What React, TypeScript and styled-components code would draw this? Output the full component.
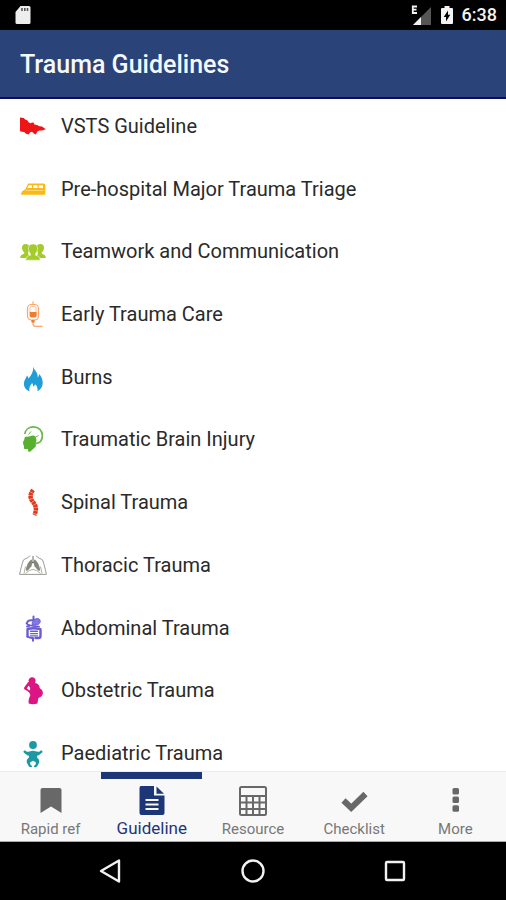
import React from "react";
import styled, { createGlobalStyle } from "styled-components";

const navy = "#1c3678";

const GlobalStyle = createGlobalStyle`
  * { box-sizing: border-box; }
  body { margin: 0; background: #fff; font-family: Roboto, "Liberation Sans", sans-serif; }
  button { font: inherit; border: 0; padding: 0; background: none; cursor: pointer; }
`;

const Screen = styled.div`
  display: flex;
  flex-direction: column;
  height: 100vh;
`;

const StatusBar = styled.div`
  display: flex;
  align-items: center;
  justify-content: space-between;
  flex: none;
  height: 30px;
  padding: 0 9px 0 14px;
  background: #000;
  color: #f4f4f4;
`;

const StatusGroup = styled.div`
  display: flex;
  align-items: center;
  gap: 9px;
`;

const Clock = styled.time`
  font-size: 18px;
  font-weight: 500;
  line-height: 24px;
`;

const Header = styled.header`
  flex: none;
  display: flex;
  align-items: center;
  height: 69px;
  padding: 2px 20px 0;
  background: #2a4379;
  border-bottom: 2px solid #0c0c66;
`;

const Title = styled.h1`
  margin: 0;
  color: #f6f8ff;
  font-size: 25px;
  font-weight: 500;
  line-height: 32px;
`;

const GuidelineList = styled.ul`
  flex: 1;
  min-height: 0;
  display: flex;
  flex-direction: column;
  justify-content: space-between;
  margin: 0;
  padding: 9px 0 0;
  list-style: none;
  overflow: hidden;
`;

const GuidelineRow = styled.button`
  display: flex;
  align-items: center;
  gap: 15px;
  width: 100%;
  height: 36px;
  padding: 0 20px;
  color: #2a2a2a;
  font-size: 20px;
  line-height: 24px;
  text-align: left;
`;

const RowIcon = styled.svg`
  flex: none;
  width: 26px;
  height: 28px;
  overflow: visible;
`;

const TabBar = styled.nav`
  flex: none;
  display: grid;
  grid-template-columns: repeat(5, 1fr);
  height: 71px;
  background: #f8f8f8;
  border-top: 1px solid #ececec;
  border-bottom: 1px solid #aaa;
`;

const Tab = styled.button<{ $active?: boolean }>`
  display: flex;
  flex-direction: column;
  align-items: center;
  justify-content: flex-end;
  gap: ${(p) => (p.$active ? 2 : 4)}px;
  padding: 0 0 3px;
  border-top: 7px solid ${(p) => (p.$active ? navy : "transparent")};
  color: ${(p) => (p.$active ? navy : "#777")};
  font-size: ${(p) => (p.$active ? 17 : 15)}px;
  line-height: ${(p) => (p.$active ? 20 : 18)}px;
`;

const TabIcon = styled.svg`
  width: 30px;
  height: 30px;
  color: ${navy};

  ${Tab}:not([aria-current]) & {
    color: #686868;
  }
`;

const SystemBar = styled.div`
  flex: none;
  display: grid;
  grid-template-columns: repeat(3, 1fr);
  height: 58px;
  padding: 0 40px;
  background: #000;
`;

const SystemButton = styled.button`
  display: grid;
  place-items: center;
  color: #f2f2f2;
`;

const guidelines: { label: string; icon: React.ReactNode }[] = [
  {
    label: "VSTS Guideline",
    icon: (
      <path
        fill="#ee1518"
        d="M0 5.500 3.800 6 5.200 7.400 7.200 8.200 8.600 10.200 10.400 11.200 12.200 10.600 13.800 10.800 14.400 12.600 17 13 19.400 14.200 22 14.600 25.800 17.200 22 18.400 19.200 18.400 17.200 19.800 15.800 22.400 13.800 21.600 12 19.800 10.200 20.200 8.600 22.400 6 21.800 4.600 20.200 2.400 19.800 0 19.200z"
      />
    ),
  },
  {
    label: "Pre-hospital Major Trauma Triage",
    icon: (
      <g>
        <path fill="#fbb915" d="M8.500 8.600h15.200q1.600 0 1.600 1.600v8.600q0 1-1 1H1.400q-.8 0-.4-1l1.200-2.600 3.200-2 2.200-4.800q.3-.8.900-.8z" />
        <path fill="#fff" d="M8.800 10.200H12v2.900H7.400zM13.200 10.200h4.300v2.900h-4.300zM18.700 10.200h4.300v2.900h-4.300z" />
        <path stroke="#fff" strokeWidth=".6" d="M5.500 15.400h18" opacity=".8" />
      </g>
    ),
  },
  {
    label: "Teamwork and Communication",
    icon: (
      <g fill="#a3cb2b">
        <path d="M5.500 7c2.800 0 4.300 1.800 4 4.600-.1 1.600-.6 2.900-1.300 3.900v1.700l3 3.800H.2c0-2.400 1-3.400 4-4.200v-1.400C2.600 13.800 2 12.300 2 10.800 2 8.400 3.300 7 5.500 7z" />
        <path d="M20.500 7c-2.800 0-4.300 1.800-4 4.600.1 1.600.6 2.900 1.300 3.900v1.700l-3 3.800h11c0-2.400-1-3.400-4-4.200v-1.400c1.600-1.600 2.200-3.100 2.200-4.600 0-2.400-1.300-3.800-3.500-3.800z" />
        <path
          stroke="#eef5d6"
          strokeWidth=".7"
          d="M13 7c3.400 0 4.800 2.200 4.500 5.200-.2 1.900-.9 3.300-2 4.500v1.500c3.400.8 4.600 1.800 4.700 5H5.800c.1-3.200 1.300-4.200 4.700-5v-1.500c-1.100-1.200-1.800-2.600-2-4.500C8.200 9.200 9.600 7 13 7z"
        />
      </g>
    ),
  },
  {
    label: "Early Trauma Care",
    icon: (
      <g fill="none" stroke="#f9a56c" strokeWidth="1.200" strokeLinecap="round">
        <path d="M13 1.800v2.600" />
        <rect x="7.500" y="4.500" width="11" height="15.500" rx="4" />
        <path d="M10 12V8q0-1.500 1.500-1.500h3Q16 6.500 16 8v4" strokeWidth=".7" />
        <path d="M9.600 12h7v3.500q0 2-2 2h-3q-2 0-2-2z" fill="#f47b2c" stroke="none" />
        <path d="M13 20v3.700q0 2.700 2.500 2.700h6.500" />
        <path d="M11.400 20h3.200v2.600h-3.200z" fill="#f47b2c" stroke="none" />
      </g>
    ),
  },
  {
    label: "Burns",
    icon: (
      <path
        fill="#219dd8"
        d="M13.400 3.800c.4 3 3.200 4.600 4 7.400.4 1.200.3 2.200.1 3.200 1.200-.9 1.500-2 1.500-3.400 2 1.600 3.500 4.800 3.700 8.200.2 4-2 7.400-5.200 9 .4-3.400-.5-5.400-2.400-7-.4 1.200-1.100 1.900-2 2.600.1-1.500-.2-2.600-1-3.800-2 2.600-3.400 4.900-2.600 8.200C6 26.800 3.800 24 3.900 20.400 4 17 6 15.500 7 12.400c.8 1 1.300 1.900 1.400 3.200 3.600-3.600 4.800-7.200 5-11.800z"
      />
    ),
  },
  {
    label: "Traumatic Brain Injury",
    icon: (
      <g>
        <path
          fill="none"
          stroke="#6aba45"
          strokeWidth="1.700"
          d="M4.800 9C5.400 4.600 9 1.900 13.600 1.900c5 0 8.800 3.600 8.800 8.500 0 4.600-2.800 7.600-6.800 8.200"
        />
        <path
          fill="#58b02e"
          d="M4.800 12.200c1.600-1 3.400-.2 5.400-1 1.800-.7 3.800-1.200 5 .2.900 1.100.4 2.500 1.400 3.300l-.8 2.800v4l-5.600 5.300-2-.2-.4-2.600c-1.600.2-3.400.4-3.800-.4-.3-.8.2-2-.2-3-.2-.7-.8-1-.5-1.700L3 17.800c-.5-.6.300-1.300.9-2.400.6-1 .5-2 .9-3.200z"
        />
        <path fill="none" stroke="#58b02e" strokeWidth=".9" d="M8.500 9.500l2.500-3M15 12.500l3.500-2" />
      </g>
    ),
  },
  {
    label: "Spinal Trauma",
    icon: (
      <g>
        <path fill="none" stroke="#f29a84" strokeWidth="4" d="M13 2C9.500 6.500 10 10.500 13 14c2.800 3.200 4.200 7.200 1.400 13" />
        <path
          fill="none"
          stroke="#e23a20"
          strokeWidth="4.400"
          strokeDasharray="2.500 .8"
          d="M13 2C9.500 6.500 10 10.500 13 14c2.800 3.200 4.200 7.200 1.400 13"
        />
      </g>
    ),
  },
  {
    label: "Thoracic Trauma",
    icon: (
      <g fill="none" stroke="#999b94" strokeWidth="1">
        <path d="M10 4.500C8.500 7.300 5 7.500 3.400 9 2 13 .6 18.500-.4 23.400h26.800C25.400 18.500 24 13 22.600 9 21 7.500 17.500 7.300 16 4.500" />
        <path d="M4 22.500l1.500-7M22 22.500l-1.500-7" strokeWidth=".8" />
        <path d="M13 5v7.500M13 11l-2 2M13 11l2 2" stroke="#666a60" />
        <path
          fill="#85897c"
          stroke="none"
          d="M11.800 8.500c.5 2.500.3 4.800-.3 7-1 1.200-2.300 2.200-3.500 3.800-1 1-2.400.6-2-1.200.8-4 2.600-8.400 5.800-9.600zM14.200 8.500c-.5 2.500-.3 4.800.3 7 1 1.200 2.300 2.200 3.500 3.800 1 1 2.400.6 2-1.200-.8-4-2.600-8.400-5.800-9.600z"
        />
        <path d="M5.500 22.500q7.500-8 15 0" strokeWidth=".8" />
      </g>
    ),
  },
  {
    label: "Abdominal Trauma",
    icon: (
      <g fill="none" stroke="#6a5cd6" strokeLinecap="round" strokeLinejoin="round">
        <path strokeWidth="2" d="M13.500 2.500v2.800q0 1-1.200 1c-3.500-.4-5.300 1-5.300 3" />
        <path fill="#8377e0" strokeWidth="1" d="M14.500 5.500c3-2.200 6.200-.8 5.600 2.500-.6 2.700-4.200 3.500-7.800 3-.5-2 .3-3.800 2.200-5.500z" />
        <path strokeWidth="1.800" d="M6.500 9.500c2 2.200 6 2.700 12.500 3.200M7 12.500h2" />
        <path strokeWidth="2.400" d="M7.500 22.500v-7.300q5.500-2 13 0v6.800q0 2-2 2h-3" />
        <path strokeWidth="1.400" d="M10.500 17.300h7M10.500 19.600h7M10.500 21.900h7" />
        <path strokeWidth="2" d="M7.500 22.500q2.500 1.700 5.500 1.500v2.800" />
      </g>
    ),
  },
  {
    label: "Obstetric Trauma",
    icon: (
      <path
        fill="#dc1484"
        fillRule="evenodd"
        d="M10.800 1.500c2.600-.8 4.800.8 4.800 3 0 1-.3 1.800-.6 2.600 3.200.6 4.400 2 4.800 5.200 2 1.200 3.200 2.800 3.100 4.800-.2 2.600-2 4.200-4.500 4.900-.6 2-.4 3.600-1 5.500-2.700 1-6.200 1-8.700 0-.6-3.200.5-5.900 1.700-8.300-.4-2-1.800-3.400-3.700-4.600-1.900-1-3.200-1.600-2.500-3.200L7.300 7.300c.6-1 .9-1 1.500-1.200-.7-2 .2-3.900 2-4.600zM8.400 9.700l-1.600 2.800 3 2c.8-2 .4-3.500-1.400-4.800z"
      />
    ),
  },
  {
    label: "Paediatric Trauma",
    icon: (
      <g fill="#1d99a4">
        <circle cx="13" cy="6" r="3.900" />
        <path d="M4.600 11.700c.6-.4 1.200 0 1.700.7 2.800 1 4-.6 6.700-.6s3.900 1.600 6.700.6c.5-.7 1.100-1.100 1.700-.7.5-.4 1 0 .8.5.6.1.6.8 0 1.200-2 2-3.600 3-5 3.200l-.2 3H9l-.2-3c-1.400-.2-3-1.200-5-3.200-.6-.4-.6-1.100 0-1.200-.2-.5.3-.9.800-.5z" />
        <path d="M9 18.600h8c2 1.600 2.800 3.400 2 5.400l-1.600 3c-.8 1.400-3.400 1.600-3.600.5 0-.7.8-1 1.600-1.500l.6-2.500-3-1.700-3 1.700.6 2.500c.8.5 1.600.8 1.600 1.500-.2 1.100-2.800.9-3.600-.5L7 24c-.8-2 0-3.800 2-5.400z" />
      </g>
    ),
  },
];

const tabs: { label: string; active?: boolean; icon: React.ReactNode }[] = [
  { label: "Rapid ref", icon: <path fill="currentColor" d="M6.500 2h17q2 0 2 2v23L15 20.500 4.500 27V4q0-2 2-2z" /> },
  {
    label: "Guideline",
    active: true,
    icon: (
      <g>
        <path fill="currentColor" d="M4 0h13v9.500h10.500V27q0 2-2 2h-21q-2 0-2-2V2q0-2 1.500-2z" />
        <path fill="currentColor" d="M19.500.5 27 7.800h-7.500z" />
        <path stroke="#f8f8f8" strokeWidth="1.800" d="M8.500 14h13M8.500 18.500h13M8.500 23h13" />
      </g>
    ),
  },
  {
    label: "Resource",
    icon: (
      <g fill="none" stroke="currentColor" strokeWidth="2">
        <rect x="2" y="1" width="26" height="28" rx="1.500" />
        <path d="M2 10h26M2 16.500h26M2 23h26M8.500 10v19M15 10v19M21.500 10v19" />
      </g>
    ),
  },
  { label: "Checklist", icon: <path fill="none" stroke="currentColor" strokeWidth="6" d="M4.500 14.500 12.200 21.800 26.500 8" /> },
  {
    label: "More",
    icon: (
      <g fill="currentColor">
        <rect x="12.500" y="2" width="6.500" height="6.500" rx="1.500" />
        <rect x="12.500" y="10.600" width="6.500" height="6.500" rx="1.500" />
        <rect x="12.500" y="19.200" width="6.500" height="6.500" rx="1.500" />
      </g>
    ),
  },
];

const systemButtons = [
  { label: "Back", shape: <path d="M21 2.500v21L3 13z" /> },
  { label: "Home", shape: <circle cx="13" cy="13" r="10.500" /> },
  { label: "Overview", shape: <rect x="4" y="4" width="18" height="18" rx="1" /> },
];

export default function App() {
  return (
    <Screen>
      <GlobalStyle />
      <StatusBar>
        <svg width="18" height="20" viewBox="0 0 18 20" aria-hidden="true">
          <path fill="#eee" d="M6.500 1H15q1.500 0 1.500 1.500v15q0 1.500-1.500 1.500H3q-1.500 0-1.500-1.500V7z" />
          <path stroke="#555" strokeWidth="1.600" d="M8 3v3M10.800 3v3M13.500 3v3" />
        </svg>
        <StatusGroup>
          <svg width="22" height="22" viewBox="0 0 22 22" aria-hidden="true">
            <path fill="#555" d="M21 3v18H3z" />
            <path fill="#f2f2f2" d="M11 13v8H3z" />
            <path fill="none" stroke="#f2f2f2" strokeWidth="1.800" d="M7 2.500H2.800v6.500H7M2.800 5.700h3.700" />
          </svg>
          <svg width="12" height="20" viewBox="0 0 12 20" aria-hidden="true">
            <path fill="#f4f4f4" d="M3.500 1h5v2H11q1 0 1 1v14q0 1-1 1H1q-1 0-1-1V4q0-1 1-1h2.500z" />
            <path fill="#000" d="M7 5.500v4.300h2.300L5 16.500v-4.600H2.700z" />
          </svg>
          <Clock>6:38</Clock>
        </StatusGroup>
      </StatusBar>
      <Header>
        <Title>Trauma Guidelines</Title>
      </Header>
      <GuidelineList>
        {guidelines.map((item) => (
          <li key={item.label}>
            <GuidelineRow type="button">
              <RowIcon viewBox="0 0 26 28" aria-hidden="true">{item.icon}</RowIcon>
              {item.label}
            </GuidelineRow>
          </li>
        ))}
      </GuidelineList>
      <TabBar>
        {tabs.map((tab) => (
          <Tab key={tab.label} type="button" $active={tab.active} aria-current={tab.active ? "page" : undefined}>
            <TabIcon viewBox="0 0 30 30" aria-hidden="true">{tab.icon}</TabIcon>
            {tab.label}
          </Tab>
        ))}
      </TabBar>
      <SystemBar>
        {systemButtons.map((button) => (
          <SystemButton key={button.label} type="button" aria-label={button.label}>
            <svg width="26" height="26" viewBox="0 0 26 26" fill="none" stroke="currentColor" strokeWidth="2.400" strokeLinejoin="round">
              {button.shape}
            </svg>
          </SystemButton>
        ))}
      </SystemBar>
    </Screen>
  );
}
